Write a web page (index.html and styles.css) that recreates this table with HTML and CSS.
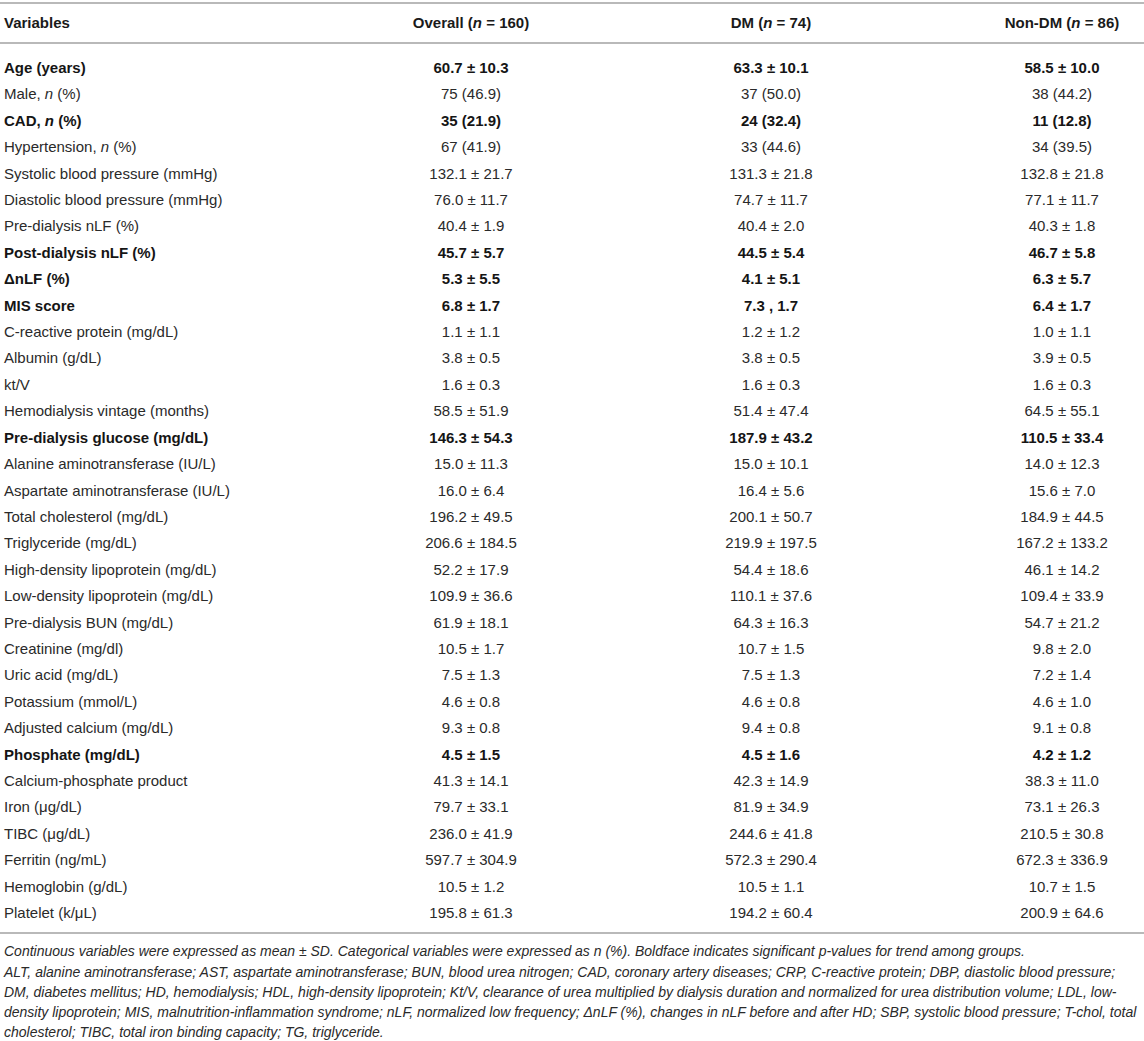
FILE: index.html
```html
<!DOCTYPE html>
<html lang="en">
<head>
<meta charset="utf-8">
<title>Table</title>
<link rel="stylesheet" href="styles.css">
</head>
<body>
<div class="wrap">
<table class="data">
<colgroup>
<col class="c1"><col class="c2"><col class="c3"><col class="c4">
</colgroup>
<thead>
<tr><th class="lbl">Variables</th><th>Overall (<i>n</i> = 160)</th><th>DM (<i>n</i> = 74)</th><th>Non-DM (<i>n</i> = 86)</th></tr>
</thead>
<tbody>
<tr class="b first"><td>Age (years)</td><td>60.7 ± 10.3</td><td>63.3 ± 10.1</td><td>58.5 ± 10.0</td></tr>
<tr><td>Male, <i>n</i> (%)</td><td>75 (46.9)</td><td>37 (50.0)</td><td>38 (44.2)</td></tr>
<tr class="b"><td>CAD, <i>n</i> (%)</td><td>35 (21.9)</td><td>24 (32.4)</td><td>11 (12.8)</td></tr>
<tr><td>Hypertension, <i>n</i> (%)</td><td>67 (41.9)</td><td>33 (44.6)</td><td>34 (39.5)</td></tr>
<tr><td>Systolic blood pressure (mmHg)</td><td>132.1 ± 21.7</td><td>131.3 ± 21.8</td><td>132.8 ± 21.8</td></tr>
<tr><td>Diastolic blood pressure (mmHg)</td><td>76.0 ± 11.7</td><td>74.7 ± 11.7</td><td>77.1 ± 11.7</td></tr>
<tr><td>Pre-dialysis nLF (%)</td><td>40.4 ± 1.9</td><td>40.4 ± 2.0</td><td>40.3 ± 1.8</td></tr>
<tr class="b"><td>Post-dialysis nLF (%)</td><td>45.7 ± 5.7</td><td>44.5 ± 5.4</td><td>46.7 ± 5.8</td></tr>
<tr class="b"><td>ΔnLF (%)</td><td>5.3 ± 5.5</td><td>4.1 ± 5.1</td><td>6.3 ± 5.7</td></tr>
<tr class="b"><td>MIS score</td><td>6.8 ± 1.7</td><td>7.3 , 1.7</td><td>6.4 ± 1.7</td></tr>
<tr><td>C-reactive protein (mg/dL)</td><td>1.1 ± 1.1</td><td>1.2 ± 1.2</td><td>1.0 ± 1.1</td></tr>
<tr><td>Albumin (g/dL)</td><td>3.8 ± 0.5</td><td>3.8 ± 0.5</td><td>3.9 ± 0.5</td></tr>
<tr><td>kt/V</td><td>1.6 ± 0.3</td><td>1.6 ± 0.3</td><td>1.6 ± 0.3</td></tr>
<tr><td>Hemodialysis vintage (months)</td><td>58.5 ± 51.9</td><td>51.4 ± 47.4</td><td>64.5 ± 55.1</td></tr>
<tr class="b"><td>Pre-dialysis glucose (mg/dL)</td><td>146.3 ± 54.3</td><td>187.9 ± 43.2</td><td>110.5 ± 33.4</td></tr>
<tr><td>Alanine aminotransferase (IU/L)</td><td>15.0 ± 11.3</td><td>15.0 ± 10.1</td><td>14.0 ± 12.3</td></tr>
<tr><td>Aspartate aminotransferase (IU/L)</td><td>16.0 ± 6.4</td><td>16.4 ± 5.6</td><td>15.6 ± 7.0</td></tr>
<tr><td>Total cholesterol (mg/dL)</td><td>196.2 ± 49.5</td><td>200.1 ± 50.7</td><td>184.9 ± 44.5</td></tr>
<tr><td>Triglyceride (mg/dL)</td><td>206.6 ± 184.5</td><td>219.9 ± 197.5</td><td>167.2 ± 133.2</td></tr>
<tr><td>High-density lipoprotein (mg/dL)</td><td>52.2 ± 17.9</td><td>54.4 ± 18.6</td><td>46.1 ± 14.2</td></tr>
<tr><td>Low-density lipoprotein (mg/dL)</td><td>109.9 ± 36.6</td><td>110.1 ± 37.6</td><td>109.4 ± 33.9</td></tr>
<tr><td>Pre-dialysis BUN (mg/dL)</td><td>61.9 ± 18.1</td><td>64.3 ± 16.3</td><td>54.7 ± 21.2</td></tr>
<tr><td>Creatinine (mg/dl)</td><td>10.5 ± 1.7</td><td>10.7 ± 1.5</td><td>9.8 ± 2.0</td></tr>
<tr><td>Uric acid (mg/dL)</td><td>7.5 ± 1.3</td><td>7.5 ± 1.3</td><td>7.2 ± 1.4</td></tr>
<tr><td>Potassium (mmol/L)</td><td>4.6 ± 0.8</td><td>4.6 ± 0.8</td><td>4.6 ± 1.0</td></tr>
<tr><td>Adjusted calcium (mg/dL)</td><td>9.3 ± 0.8</td><td>9.4 ± 0.8</td><td>9.1 ± 0.8</td></tr>
<tr class="b"><td>Phosphate (mg/dL)</td><td>4.5 ± 1.5</td><td>4.5 ± 1.6</td><td>4.2 ± 1.2</td></tr>
<tr><td>Calcium-phosphate product</td><td>41.3 ± 14.1</td><td>42.3 ± 14.9</td><td>38.3 ± 11.0</td></tr>
<tr><td>Iron (μg/dL)</td><td>79.7 ± 33.1</td><td>81.9 ± 34.9</td><td>73.1 ± 26.3</td></tr>
<tr><td>TIBC (μg/dL)</td><td>236.0 ± 41.9</td><td>244.6 ± 41.8</td><td>210.5 ± 30.8</td></tr>
<tr><td>Ferritin (ng/mL)</td><td>597.7 ± 304.9</td><td>572.3 ± 290.4</td><td>672.3 ± 336.9</td></tr>
<tr><td>Hemoglobin (g/dL)</td><td>10.5 ± 1.2</td><td>10.5 ± 1.1</td><td>10.7 ± 1.5</td></tr>
<tr class="last"><td>Platelet (k/μL)</td><td>195.8 ± 61.3</td><td>194.2 ± 60.4</td><td>200.9 ± 64.6</td></tr>
</tbody>
</table>
<div class="notes">
<p>Continuous variables were expressed as mean ± SD. Categorical variables were expressed as n (%). Boldface indicates significant p-values for trend among groups.</p>
<p>ALT, alanine aminotransferase; AST, aspartate aminotransferase; BUN, blood urea nitrogen; CAD, coronary artery diseases; CRP, C-reactive protein; DBP, diastolic blood pressure; DM, diabetes mellitus; HD, hemodialysis; HDL, high-density lipoprotein; Kt/V, clearance of urea multiplied by dialysis duration and normalized for urea distribution volume; LDL, low-density lipoprotein; MIS, malnutrition-inflammation syndrome; nLF, normalized low frequency; ΔnLF (%), changes in nLF before and after HD; SBP, systolic blood pressure; T-chol, total cholesterol; TIBC, total iron binding capacity; TG, triglyceride.</p>
</div>
</div>
</body>
</html>
```
FILE: styles.css
```css
html, body {
  margin: 0;
  padding: 0;
  background: #ffffff;
}
body {
  font-family: "Liberation Sans", Arial, Helvetica, sans-serif;
  color: #2a2a2a;
}
.wrap {
  padding-top: 2px;
}
.data {
  width: 100%;
  border-collapse: collapse;
  table-layout: fixed;
  font-size: 15px;
}
.c1 { width: 380px; }
.c2 { width: 182px; }
.c3 { width: 418px; }
.c4 { width: 164px; }
.data th {
  font-weight: bold;
  color: #1a1a1a;
  text-align: center;
  padding: 10px 4px;
  line-height: 18px;
  border-top: 2px solid #b9b9b9;
  border-bottom: 2px solid #b9b9b9;
}
.data th.lbl {
  text-align: left;
}
.data td {
  padding: 4px 4px;
  line-height: 18.4px;
  text-align: center;
  white-space: nowrap;
}
.data td:first-child {
  text-align: left;
}
.data tr.b td {
  font-weight: bold;
  color: #151515;
}
.data tr.first td {
  padding-top: 15px;
}
.data tr.last td {
  padding-bottom: 10px;
  border-bottom: 2px solid #b9b9b9;
}
.notes {
  padding: 7px 4px 0 4px;
  font-size: 14px;
  font-style: italic;
  line-height: 20.2px;
  color: #2a2a2a;
}
.notes p {
  margin: 0;
}
```
